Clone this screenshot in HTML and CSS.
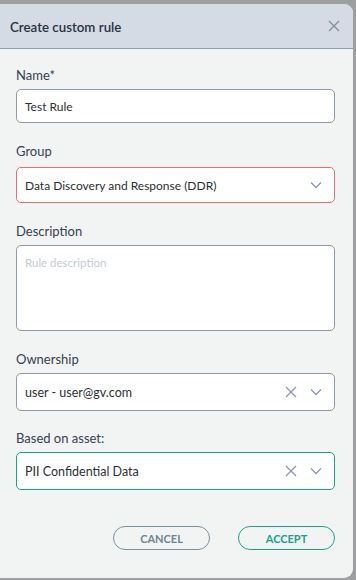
FILE: index.html
```html
<!DOCTYPE html>
<html lang="en">
<head>
  <meta charset="UTF-8">
  <meta name="viewport" content="width=device-width, initial-scale=1.0">
  <title>Create custom rule</title>
  <link rel="stylesheet" href="styles.css">
</head>
<body>
  <div class="dialog">
    <div class="dialog-header">
      <span class="dialog-title">Create custom rule</span>
      <button class="close-btn" aria-label="Close">
        <svg width="12" height="12" viewBox="0 0 12 12"><path d="M1 1L11 11M11 1L1 11" stroke="currentColor" stroke-width="1.3" fill="none"/></svg>
      </button>
    </div>

    <div class="dialog-body">
      <div class="field">
        <label>Name*</label>
        <div class="control name-input">Test Rule</div>
      </div>

      <div class="field">
        <label>Group</label>
        <div class="control select error">
          <span class="value small">Data Discovery and Response (DDR)</span>
          <span class="chev">
            <svg width="12" height="8" viewBox="0 0 12 8"><path d="M1 1.5L6 6.5L11 1.5" stroke="currentColor" stroke-width="1.3" fill="none"/></svg>
          </span>
        </div>
      </div>

      <div class="field">
        <label>Description</label>
        <div class="control textarea"><span class="placeholder">Rule description</span></div>
      </div>

      <div class="field owner">
        <label>Ownership</label>
        <div class="control select tall">
          <span class="value">user - user@gv.com</span>
          <span class="clear">
            <svg width="12" height="12" viewBox="0 0 12 12"><path d="M1 1L11 11M11 1L1 11" stroke="currentColor" stroke-width="1.3" fill="none"/></svg>
          </span>
          <span class="chev">
            <svg width="12" height="8" viewBox="0 0 12 8"><path d="M1 1.5L6 6.5L11 1.5" stroke="currentColor" stroke-width="1.3" fill="none"/></svg>
          </span>
        </div>
      </div>

      <div class="field">
        <label>Based on asset:</label>
        <div class="control select tall active">
          <span class="value">PII Confidential Data</span>
          <span class="clear">
            <svg width="12" height="12" viewBox="0 0 12 12"><path d="M1 1L11 11M11 1L1 11" stroke="currentColor" stroke-width="1.3" fill="none"/></svg>
          </span>
          <span class="chev">
            <svg width="12" height="8" viewBox="0 0 12 8"><path d="M1 1.5L6 6.5L11 1.5" stroke="currentColor" stroke-width="1.3" fill="none"/></svg>
          </span>
        </div>
      </div>

      <div class="actions">
        <button class="btn btn-cancel">CANCEL</button>
        <button class="btn btn-accept">ACCEPT</button>
      </div>
    </div>
  </div>
</body>
</html>
```

FILE: styles.css
```css
html, body {
  margin: 0;
  height: 100%;
}
body {
  font-family: Lato, "Noto Sans", Arial, sans-serif;
  background-color: #9d9fa1;
  padding-top: 4px;
  box-sizing: border-box;
}
.dialog {
  width: 353px;
  height: 574px;
  background: #f2f4f4;
  border-radius: 0 9px 9px 0;
  overflow: hidden;
  display: flex;
  flex-direction: column;
}
.dialog-header {
  height: 44px;
  background: #d4dbe5;
  border-bottom: 1px solid #8d9db4;
  display: flex;
  align-items: center;
  justify-content: space-between;
  padding: 0 13px 0 10px;
}
.dialog-title {
  font-size: 13.3px;
  color: #28313f;
  font-weight: 600;
  padding-top: 2px;
}
.close-btn {
  background: none;
  border: none;
  padding: 0;
  color: #7b909b;
  cursor: pointer;
  display: flex;
}
.dialog-body {
  padding: 16px 18px 0 16px;
  flex: 1;
  display: flex;
  flex-direction: column;
}
.field {
  display: flex;
  flex-direction: column;
  margin-bottom: 18px;
}
.field.owner {
  margin-bottom: 17px;
}
.field label {
  font-size: 13px;
  line-height: 20px;
  color: #36404f;
  margin-bottom: 4px;
}
.control {
  background: #fff;
  border: 1px solid #8e9ab0;
  border-radius: 5px;
  box-sizing: border-box;
  display: flex;
  align-items: center;
  padding: 0 8px;
  color: #2b2f36;
}
.name-input {
  height: 34px;
  font-size: 12px;
}
.select {
  height: 36px;
  gap: 13px;
}
.select.tall {
  height: 38px;
}
.select.error {
  border-color: #e8706c;
  margin-top: 2px;
}
.select.active {
  border-color: #18a38b;
}
.value {
  flex: 1;
  font-size: 12.5px;
}
.value.small {
  font-size: 12px;
}
.clear, .chev {
  color: #8c98a9;
  display: flex;
}
.chev {
  margin-right: 4px;
}
.textarea {
  height: 86px;
  align-items: flex-start;
  padding-top: 10px;
}
.placeholder {
  font-size: 11.5px;
  color: #c5cbd4;
}
.actions {
  display: flex;
  justify-content: flex-end;
  gap: 28px;
  margin-top: 18px;
}
.btn {
  width: 97px;
  height: 24px;
  border-radius: 12px;
  background: transparent;
  font-family: Lato, "Noto Sans", Arial, sans-serif;
  font-size: 11px;
  font-weight: 700;
  cursor: pointer;
  padding: 0;
}
.btn-cancel {
  border: 1px solid #7b909b;
  color: #6e8590;
}
.btn-accept {
  border: 1px solid #18a38b;
  color: #18a38b;
}
```
